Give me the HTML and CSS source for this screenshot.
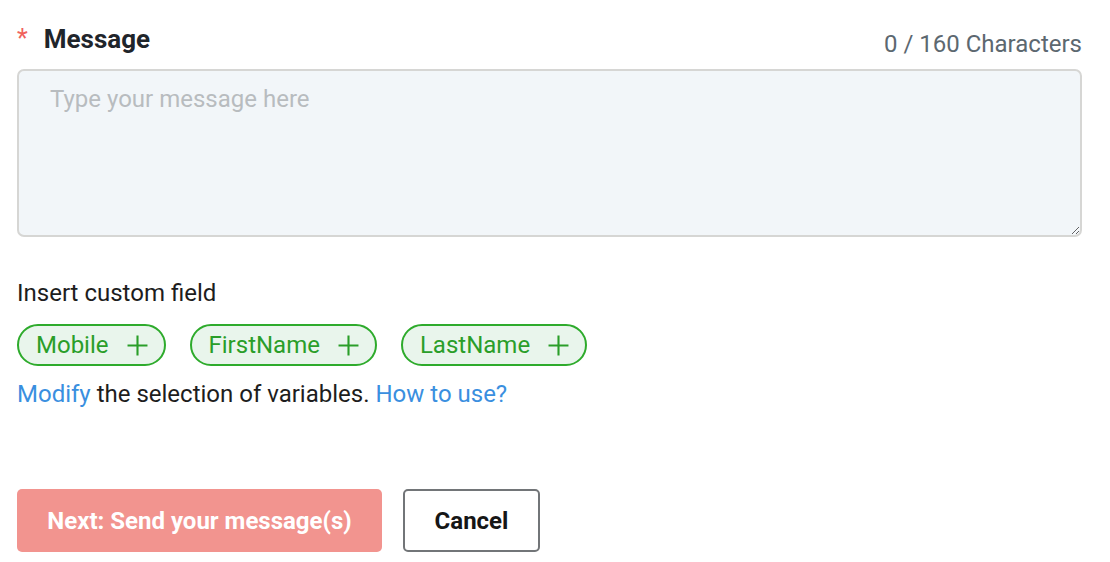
FILE: index.html
```html
<!DOCTYPE html>
<html lang="en">
<head>
<meta charset="utf-8">
<title>Message</title>
<link rel="stylesheet" href="styles.css">
</head>
<body>
<div class="form">
  <div class="field-head">
    <label class="label" for="msg"><span class="req">*</span>Message</label>
    <span class="counter">0 / 160 Characters</span>
  </div>
  <textarea id="msg" class="textarea" placeholder="Type your message here"></textarea>

  <div class="custom">
    <div class="custom-title">Insert custom field</div>
    <div class="chips">
      <button class="chip" type="button">Mobile<svg class="plus" viewBox="0 0 20 20" width="20" height="20"><path d="M10 0.5v19M0.5 10h19" stroke="currentColor" stroke-width="2" fill="none"/></svg></button>
      <button class="chip" type="button">FirstName<svg class="plus" viewBox="0 0 20 20" width="20" height="20"><path d="M10 0.5v19M0.5 10h19" stroke="currentColor" stroke-width="2" fill="none"/></svg></button>
      <button class="chip" type="button">LastName<svg class="plus" viewBox="0 0 20 20" width="20" height="20"><path d="M10 0.5v19M0.5 10h19" stroke="currentColor" stroke-width="2" fill="none"/></svg></button>
    </div>
    <p class="hint"><a href="#" class="link">Modify</a> the selection of variables. <a href="#" class="link">How to use?</a></p>
  </div>

  <div class="actions">
    <button class="btn btn-primary" type="button">Next: Send your message(s)</button>
    <button class="btn btn-secondary" type="button">Cancel</button>
  </div>
</div>
</body>
</html>
```
FILE: styles.css
```css
* { box-sizing: border-box; }
html, body { margin: 0; padding: 0; background: #fff; }
body {
  font-family: Roboto, "Liberation Sans", Arial, sans-serif;
  color: #222;
}
.form {
  padding: 24px 28px 0 17px;
}
.field-head {
  display: flex;
  justify-content: space-between;
  align-items: flex-start;
  height: 45px;
}
.label {
  font-size: 26px;
  line-height: 30px;
  font-weight: 700;
  color: #1f252b;
  display: flex;
  align-items: baseline;
}
.req {
  color: #f0625c;
  font-weight: 400;
  font-size: 25px;
  margin-right: 16px;
  position: relative;
  top: -1px;
}
.counter {
  font-size: 24px;
  line-height: 28px;
  margin-top: 6px;
  color: #5c6870;
}
.textarea {
  display: block;
  width: 100%;
  height: 168px;
  border: 2px solid #d6d6d4;
  border-radius: 7px;
  background: #f2f6f9;
  padding: 14px 31px;
  font-family: inherit;
  font-size: 24px;
  line-height: 28px;
  color: #222;
  resize: vertical;
  outline: none;
}
.textarea::placeholder { color: #b8bcbf; }
.custom {
  margin-top: 42px;
}
.custom-title {
  font-size: 24px;
  color: #1d1d1d;
  line-height: 28px;
}
.chips {
  display: flex;
  gap: 24px;
  margin-top: 17px;
}
.chip {
  display: flex;
  align-items: center;
  gap: 18px;
  height: 42px;
  padding: 0 16px 0 17px;
  border: 2px solid #2eab2c;
  border-radius: 21px;
  background: #e9f5ec;
  color: #2a9e29;
  font-family: inherit;
  font-size: 24px;
  cursor: pointer;
}
.plus { display: block; width: 21px; height: 21px; }
.hint {
  margin: 14px 0 0;
  font-size: 24px;
  color: #1d1d1d;
  line-height: 28px;
}
.link { color: #3a8fdf; text-decoration: none; }
.actions {
  display: flex;
  gap: 21px;
  margin-top: 81px;
}
.btn {
  height: 63px;
  border-radius: 5px;
  font-family: inherit;
  font-size: 24px;
  font-weight: 700;
  cursor: pointer;
  padding: 0;
}
.btn-primary {
  width: 365px;
  background: #f2948f;
  border: none;
  color: #fff;
}
.btn-secondary {
  width: 137px;
  background: #fff;
  border: 2px solid #727578;
  color: #161616;
}
```
